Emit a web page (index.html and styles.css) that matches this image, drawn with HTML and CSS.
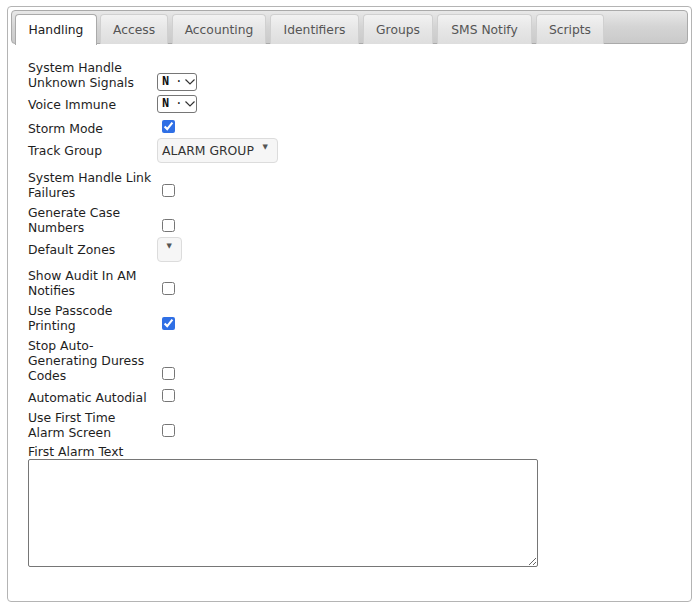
FILE: index.html
```html
<!DOCTYPE html>
<html lang="en">
<head>
    <meta charset="UTF-8">
    <title>Account Settings - Handling</title>
    <link rel="stylesheet" href="styles.css">
</head>
<body>
    <div class="tabs">
        <ul class="tab-nav">
            <li class="tab tab-handling active"><a href="#">Handling</a></li>
            <li class="tab tab-access"><a href="#">Access</a></li>
            <li class="tab tab-accounting"><a href="#">Accounting</a></li>
            <li class="tab tab-identifiers"><a href="#">Identifiers</a></li>
            <li class="tab tab-groups"><a href="#">Groups</a></li>
            <li class="tab tab-sms"><a href="#">SMS Notify</a></li>
            <li class="tab tab-scripts"><a href="#">Scripts</a></li>
        </ul>

        <div class="tab-panel">
            <table class="form-table">
                <tr>
                    <td class="lbl">System Handle Unknown Signals</td>
                    <td class="ctl">
                        <span class="mini-select">N<span class="dots">·</span>
                            <svg width="10" height="6" viewBox="0 0 10 6"><path d="M0.5 0.5 L5 5 L9.5 0.5" fill="none" stroke="#333" stroke-width="1.2"/></svg>
                        </span>
                    </td>
                </tr>
                <tr class="gap-4">
                    <td class="lbl">Voice Immune</td>
                    <td class="ctl">
                        <span class="mini-select">N<span class="dots">·</span>
                            <svg width="10" height="6" viewBox="0 0 10 6"><path d="M0.5 0.5 L5 5 L9.5 0.5" fill="none" stroke="#333" stroke-width="1.2"/></svg>
                        </span>
                    </td>
                </tr>
                <tr>
                    <td class="lbl">Storm Mode</td>
                    <td class="ctl"><input type="checkbox" checked></td>
                </tr>
                <tr class="drop-row">
                    <td class="lbl">Track Group</td>
                    <td class="ctl"><span class="drop drop-wide">ALARM GROUP<span class="caret">▼</span></span></td>
                </tr>
                <tr class="gap-7">
                    <td class="lbl">System Handle Link Failures</td>
                    <td class="ctl"><input type="checkbox"></td>
                </tr>
                <tr>
                    <td class="lbl">Generate Case Numbers</td>
                    <td class="ctl"><input type="checkbox"></td>
                </tr>
                <tr class="drop-row">
                    <td class="lbl">Default Zones</td>
                    <td class="ctl"><span class="drop drop-empty"><span class="caret">▼</span></span></td>
                </tr>
                <tr class="gap-6">
                    <td class="lbl">Show Audit In AM Notifies</td>
                    <td class="ctl"><input type="checkbox"></td>
                </tr>
                <tr>
                    <td class="lbl">Use Passcode Printing</td>
                    <td class="ctl"><input type="checkbox" checked></td>
                </tr>
                <tr>
                    <td class="lbl">Stop Auto-Generating Duress Codes</td>
                    <td class="ctl"><input type="checkbox"></td>
                </tr>
                <tr class="gap-3">
                    <td class="lbl">Automatic Autodial</td>
                    <td class="ctl"><input type="checkbox"></td>
                </tr>
                <tr>
                    <td class="lbl">Use First Time Alarm Screen</td>
                    <td class="ctl"><input type="checkbox"></td>
                </tr>
            </table>

            <label for="firstAlarmText" class="block-label">First Alarm Text</label>
            <textarea id="firstAlarmText" class="alarm-text"></textarea>
        </div>
    </div>
</body>
</html>
```

FILE: styles.css
```css
body {
    margin: 0;
    padding: 6px 8px 0 7px;
    background: #fff;
    font-family: "DejaVu Sans", Verdana, sans-serif;
    font-size: 12.4px;
    color: #1e1e1e;
}

/* outer tab container */
.tabs {
    width: 685px;
    height: 596px;
    box-sizing: border-box;
    border: 1px solid #b4b4b4;
    border-radius: 4px;
    padding: 3px;
}

.tab-nav {
    display: flex;
    margin: 0;
    padding: 3px 3px 0;
    list-style: none;
    height: 34px;
    box-sizing: border-box;
    border: 1px solid #aaa;
    border-radius: 4px;
    background: linear-gradient(#e8e8e8, #d4d4d4 50%, #cacaca);
}

.tab {
    margin-right: 4px;
    height: 30px;
    box-sizing: border-box;
    border: 1px solid #d0d0d0;
    border-bottom: 0;
    border-radius: 4px 4px 0 0;
    background: linear-gradient(#f2f2f2, #e6e6e6 50%, #dedede);
}

.tab a {
    display: block;
    padding-top: 1px;
    line-height: 28px;
    text-align: center;
    font-size: 12.3px;
    color: #555;
    text-decoration: none;
}

.tab.active {
    background: #fff;
    border-color: #aaa;
    height: 31px;
}

.tab.active a {
    color: #212121;
}

/* tab widths as rendered by the original theme */
.tab-handling { width: 82px; margin-right: 3px; }
.tab-access { width: 68px; }
.tab-accounting { width: 94px; }
.tab-identifiers { width: 89px; }
.tab-groups { width: 70px; }
.tab-sms { width: 95px; }
.tab-scripts { width: 68px; }

.tab-panel {
    padding: 11px 18px 0 17px;
}

.form-table {
    border-collapse: separate;
    border-spacing: 0;
}

.form-table td {
    padding: 5px 0 0;
    line-height: 15px;
    vertical-align: bottom;
}

.form-table .gap-3 td { padding-top: 3px; }
.form-table .gap-4 td { padding-top: 4px; }
.form-table .gap-6 td { padding-top: 6px; }
.form-table .gap-7 td { padding-top: 7px; }

.form-table .drop-row td {
    padding-top: 2px;
    vertical-align: middle;
}

.lbl {
    width: 126px;
    padding-right: 3px !important;
}

.ctl input[type="checkbox"] {
    display: block;
    width: 13px;
    height: 13px;
    margin: 3px 0 3px 5px;
    accent-color: #2f6fe5;
}

.mini-select {
    display: flex;
    align-items: center;
    width: 40px;
    height: 18px;
    margin: 1px 0 -1px;
    box-sizing: border-box;
    border: 1px solid #767676;
    border-radius: 3px;
    padding-left: 4px;
    font-family: "Liberation Mono", monospace;
    font-weight: bold;
    font-size: 12px;
    color: #111;
}

.mini-select .dots {
    margin: 0 3px 0 6px;
    font-weight: normal;
}

.drop {
    display: block;
    position: relative;
    height: 25px;
    box-sizing: border-box;
    border: 1px solid #dcdcdc;
    border-radius: 4px;
    background: #f6f6f6;
    line-height: 23px;
    color: #333;
}

.drop-wide {
    width: 121px;
    padding-left: 4px;
}

.drop-empty {
    width: 25px;
}

.caret {
    position: absolute;
    top: -3px;
    right: 9px;
    font-size: 7px;
    color: #555;
}

.block-label {
    display: block;
    line-height: 15px;
    margin-top: 4px;
}

.alarm-text {
    display: block;
    width: 510px;
    height: 108px;
    box-sizing: border-box;
    margin: 0;
    border: 1px solid #767676;
    border-radius: 2px;
    resize: both;
}
```
